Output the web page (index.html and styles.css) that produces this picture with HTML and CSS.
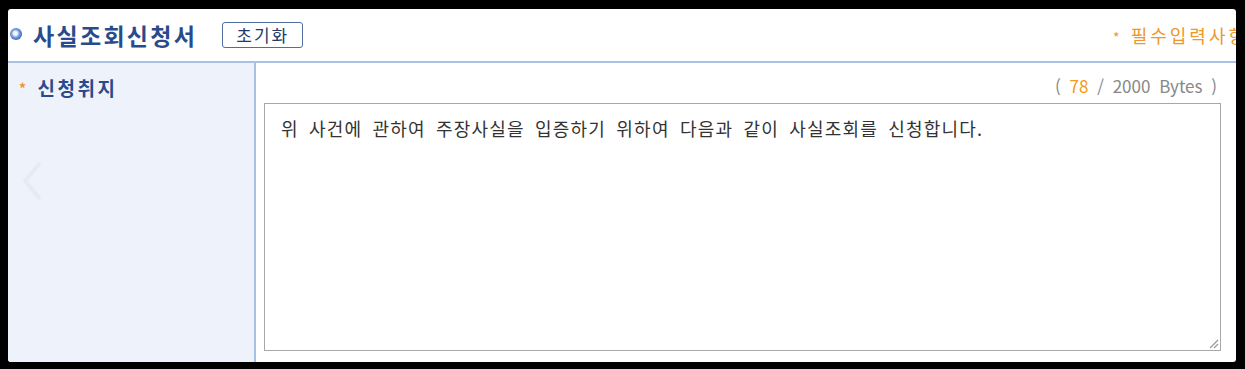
FILE: index.html
```html
<!DOCTYPE html>
<html lang="ko">
	<head>
		<meta charset="UTF-8" />
		<title>사실조회신청서</title>
		<link rel="stylesheet" href="styles.css">
	</head>
	<body>
		<div class="panel">
			<div class="head">
				<span class="dot"></span>
				<h1>사실조회신청서</h1>
				<button class="reset">초기화</button>
				<span class="need"><i>*</i>필수입력사항</span>
			</div>
			<div class="row">
				<div class="label"><i>*</i>신청취지</div>
				<div class="field">
					<div class="count">( <b>78</b> / 2000 Bytes )</div>
					<div class="text">
						위 사건에 관하여 주장사실을 입증하기 위하여 다음과 같이 사실조회를 신청합니다.
						<svg class="grip" width="12" height="12" viewBox="0 0 12 12">
							<path d="M11 3 L3 11 M11 7 L7 11" stroke="#999" stroke-width="1.2" fill="none" />
						</svg>
					</div>
				</div>
			</div>
			<svg class="arrow" width="24" height="44" viewBox="0 0 24 44">
				<path d="M20 4 L5 22 L20 40" stroke="#e5ebf4" stroke-width="4" fill="none" />
			</svg>
		</div>
	</body>
</html>
```

FILE: styles.css
```css
body {
	margin: 0;
	padding: 9px 9px 7px 8px;
	background: #000;
	font-family: "Noto Sans CJK KR", "Noto Sans", sans-serif;
}
.panel {
	position: relative;
	height: 353px;
	background: #fff;
	overflow: hidden;
	display: flex;
	flex-direction: column;
	border-radius: 3px;
}

.head {
	height: 52px;
	display: flex;
	align-items: center;
	border-bottom: 2px solid #a9c2e4;
	padding-left: 2px;
	white-space: nowrap;
}
.dot {
	width: 12px;
	height: 12px;
	border-radius: 50%;
	background: radial-gradient(circle at 45% 45%, #fff 0, #e6eefb 22%, #7b9fe0 42%, #2c55a8 80%);
	margin-top: -2px;
}
.head h1 {
	margin: 0 0 0 11px;
	font-size: 23px;
	font-weight: bold;
	letter-spacing: 2.3px;
	color: #2a4b8b;
}
.reset {
	margin-left: 25px;
	width: 81px;
	height: 26px;
	padding: 0;
	border: 1px solid #4f6d9f;
	border-radius: 3px;
	background: #fff;
	color: #203a6c;
	font-family: inherit;
	font-size: 17px;
	letter-spacing: 2px;
	line-height: 24px;
}
.need {
	margin-left: auto;
	margin-right: -12px;
	color: #f0962a;
	font-size: 18px;
	letter-spacing: 3px;
}
.need i {
	font-style: normal;
	font-size: 14px;
	margin-right: 8px;
}

.row {
	flex: 1;
	display: flex;
}
.label {
	width: 248px;
	background: #eef3fb;
	border-right: 2px solid #a6c2e8;
	padding: 11px 0 0 11px;
	box-sizing: border-box;
	font-size: 19px;
	font-weight: bold;
	letter-spacing: 2.5px;
	color: #2a4b8b;
}
.label i {
	font-style: normal;
	color: #f0962a;
	font-size: 14px;
	margin-right: 9px;
	vertical-align: 2px;
}
.field {
	flex: 1;
	padding: 10px 15px 11px 8px;
	display: flex;
	flex-direction: column;
}
.count {
	text-align: right;
	padding-right: 4px;
	height: 30px;
	font-size: 17px;
	color: #888;
	word-spacing: 4px;
}
.count b {
	font-weight: normal;
	color: #f39a1c;
}
.text {
	position: relative;
	flex: 1;
	border: 1px solid #a8a8a8;
	padding: 11px 16px;
	font-size: 18px;
	letter-spacing: 1.2px;
	word-spacing: 4px;
	color: #333;
}
.grip {
	position: absolute;
	right: 1px;
	bottom: 1px;
}
.arrow {
	position: absolute;
	left: 12px;
	top: 150px;
}
```
